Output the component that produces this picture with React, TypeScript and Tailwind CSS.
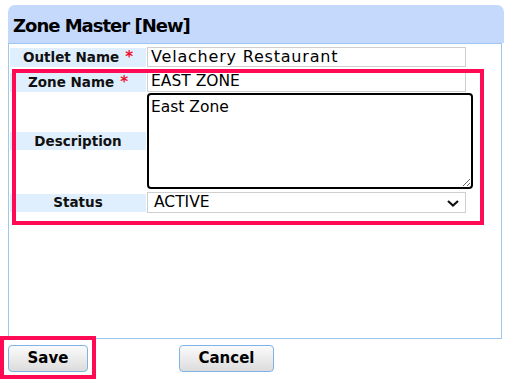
import React from "react";

export default function App() {
  const font = { fontFamily: '"DejaVu Sans", Verdana, sans-serif' };
  return (
    <div className="relative w-[513px] h-[383px] bg-white overflow-hidden" style={font}>
      <div className="ml-[8px] mt-[5px] w-[496px] h-[38px] bg-[#c5d9fc] rounded-t-[7px] flex items-center pl-[5px] pt-[2px] text-[18px] tracking-[-1px] font-bold text-black">
        Zone Master [New]
      </div>
      <div className="ml-[8px] w-[494px] h-[296px] border border-[#9ec6ef] pt-[3px]">
        <div className="flex items-center h-[20px]">
          <div className="ml-[1px] w-[136px] h-[19px] bg-[#e0effd] flex items-center justify-center text-[13.5px] font-bold text-[#111]">
            Outlet Name <span className="text-[#f0102a] ml-[6px] text-[15px] leading-none">*</span>
          </div>
          <div className="ml-[1px] w-[319px] h-[20px] border border-[#cfcfcf] flex items-center pl-[3px] text-[16px] tracking-[0.8px] text-black">
            Velachery Restaurant
          </div>
        </div>
        <div className="flex items-center h-[20px] mt-[5px]">
          <div className="ml-[1px] w-[136px] h-[19px] bg-[#e0effd] flex items-center justify-center text-[13.5px] font-bold text-[#111]">
            Zone Name <span className="text-[#f0102a] ml-[6px] text-[15px] leading-none">*</span>
          </div>
          <div className="ml-[1px] w-[319px] h-[20px] border border-[#cfcfcf] flex items-center pl-[3px] text-[15.5px] text-black">
            EAST ZONE
          </div>
        </div>
        <div className="flex items-center h-[96px] mt-[1px]">
          <div className="ml-[1px] w-[136px] h-[18px] bg-[#e0effd] flex items-center justify-center text-[13.5px] font-bold text-[#111]">
            Description
          </div>
          <textarea
            className="ml-[1px] w-[326px] h-[96px] border-2 border-black rounded-[4px] px-[2px] py-[1px] text-[15.5px] text-black outline-none"
            style={font}
            defaultValue="East Zone"
          />
        </div>
        <div className="flex items-center h-[21px] mt-[3px]">
          <div className="ml-[1px] w-[136px] h-[18px] bg-[#e0effd] flex items-center justify-center text-[13.5px] font-bold text-[#111]">
            Status
          </div>
          <div className="relative ml-[1px] w-[319px] h-[21px] border border-[#cfcfcf] flex items-center pl-[6px] text-[15.5px] text-black">
            ACTIVE
            <svg className="absolute right-[6px] top-[7px]" width="12" height="7" viewBox="0 0 12 7">
              <path d="M1 1 L6 5.5 L11 1" fill="none" stroke="#111" strokeWidth="2.2" />
            </svg>
          </div>
        </div>
      </div>
      <div className="flex ml-[8px] mt-[6px] gap-[91px]">
        <button className="w-[80px] h-[27px] rounded-[4px] border border-[#7fb2e8] bg-gradient-to-b from-[#fbfbfb] to-[#dcdcdc] text-[15px] font-bold text-black" style={font}>
          Save
        </button>
        <button className="w-[95px] h-[27px] rounded-[4px] border border-[#7fb2e8] bg-gradient-to-b from-[#fbfbfb] to-[#dcdcdc] text-[15px] font-bold text-black" style={font}>
          Cancel
        </button>
      </div>
      <div className="absolute left-[12px] top-[69px] w-[472px] h-[156px] border-4 border-[#fe0a55] pointer-events-none" />
      <div className="absolute left-0 top-[336px] w-[96px] h-[43px] border-4 border-[#fe0a55] pointer-events-none" />
    </div>
  );
}
